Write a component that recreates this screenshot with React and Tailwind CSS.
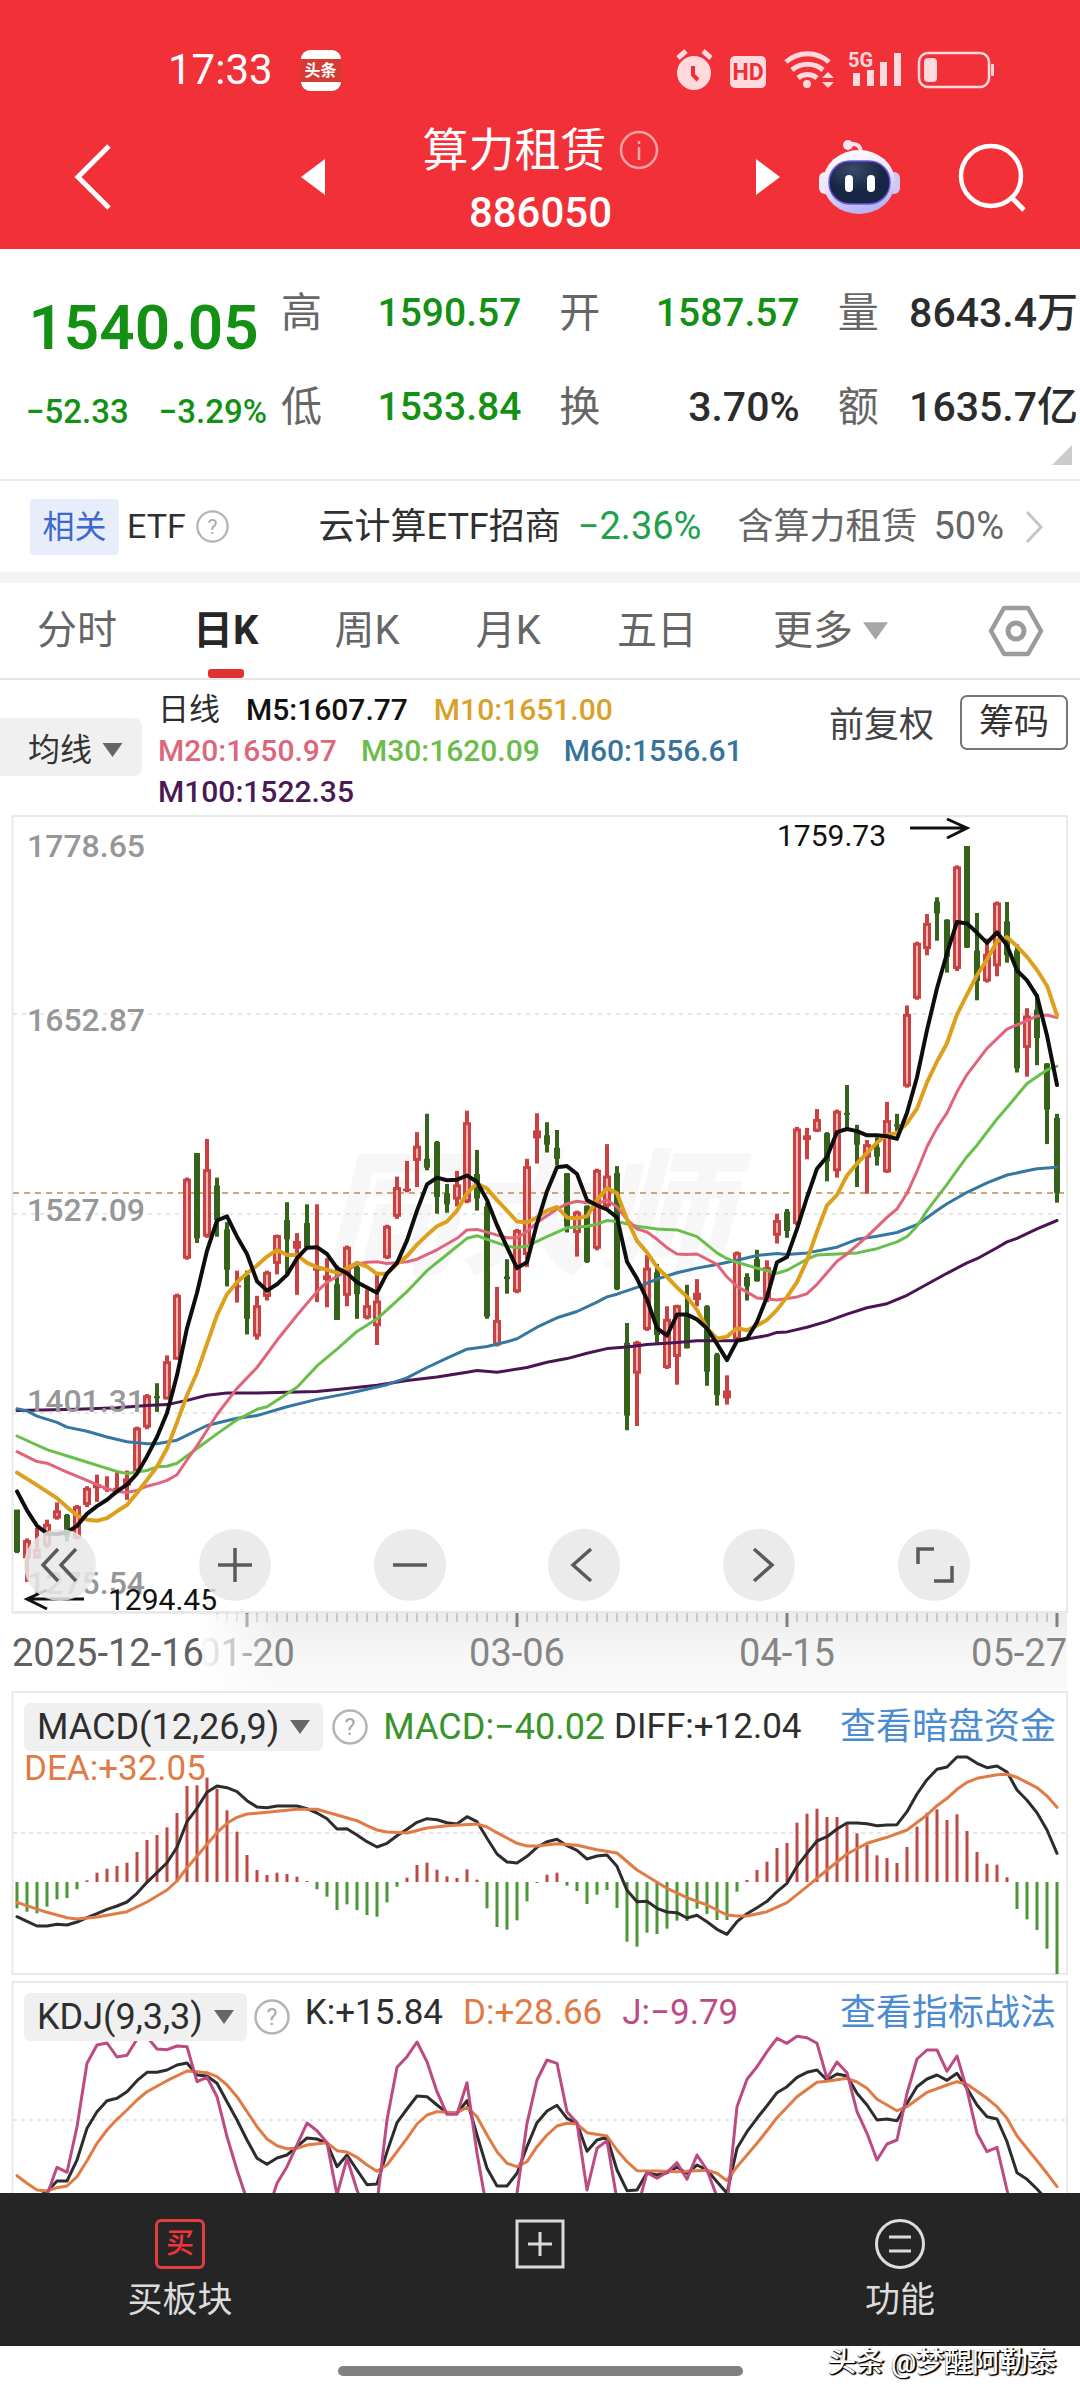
import React from "react";

const GREEN = "#35631b";
const RED = "#c94141";

/* Chart rows are digitised on a 1568-step grid that covers 820 px. */
const cy = (v) => Math.round((800 + v / 1.912) * 10) / 10;
const cx = (i) => 17 + i * 10;

// high, body top, body bottom, low, direction
const CANDLES = `1357,1357,1438,1440,g;1412,1415,1450,1495,r;1392,1432,1450,1450,r;1376,1384,1426,1430,r;1343,1358,1374,1376,r;1365,1367,1408,1418,g;1348,1350,1412,1414,r;1312,1315,1348,1352,r;1290,1308,1316,1342,r;1293,1315,1318,1323,r;1285,1315,1320,1323,r;1282,1297,1311,1338,r;1198,1200,1284,1284,r;1136,1138,1200,1203,r;1115,1140,1142,1170,g;1062,1073,1146,1146,r;944,946,1070,1070,r;722,724,877,879,r;675,675,838,847,g;648,706,835,837,r;722,737,803,835,g;807,821,898,930,g;900,928,932,961,r;900,908,992,1022,g;948,966,1026,1032,r;900,902,950,957,r;831,832,887,907,r;769,803,840,909,g;828,843,858,946,r;773,809,855,858,g;773,895,900,960,r;876,909,918,970,r;890,926,994,994,g;852,854,948,968,r;882,893,945,992,g;936,966,991,993,r;903,957,1006,1042,r;812,814,876,878,r;720,740,797,801,r;690,743,748,750,r;635,661,690,740,r;600,686,703,708,g;652,654,759,791,g;734,752,773,789,g;709,735,764,777,r;594,616,769,771,r;669,715,762,785,g;770,777,988,992,g;931,994,1043,1045,r;878,911,916,944,g;820,822,941,943,r;686,700,870,893,r;599,632,647,695,r;616,641,659,674,g;631,665,686,698,g;713,714,815,827,g;785,787,828,873,r;775,776,883,885,g;705,707,858,861,r;658,718,777,780,r;700,713,935,937,g;1000,1038,1177,1205,g;1034,1036,1097,1197,r;870,894,1013,1015,r;887,903,1023,1038,g;968,992,1086,1088,r;965,966,1065,1118,r;927,985,1048,1049,g;916,942,956,968,r;966,968,1093,1120,g;1057,1060,1138,1158,g;1100,1129,1144,1156,r;863,865,1032,1034,r;905,912,930,957,g;860,878,920,921,g;880,893,955,960,r;791,803,833,848,r;782,787,824,837,g;625,628,811,813,r;627,641,650,687,r;591,610,634,635,r;635,637,691,729,g;592,594,710,722,r;545,598,601,627,g;621,635,659,740,g;650,658,684,753,r;645,664,682,699,g;577,612,712,713,r;600,620,623,633,g;393,409,548,550,r;271,273,380,382,r;218,235,285,297,r;186,194,217,269,g;228,229,300,330,g;125,127,323,327,r;88,88,282,283,g;216,288,346,383,g;265,294,347,349,r;194,196,318,337,r;195,232,297,311,g;276,288,513,521,g;398,412,474,529,r;372,401,455,507,g;503,504,592,658,g;600,608,751,770,g`
  .split(";")
  .map((row) => {
    const p = row.split(",");
    return { h: +p[0], t: +p[1], b: +p[2], l: +p[3], up: p[4] === "r" };
  });

const MA = [
  { color: "#4a1552", w: 3, d: "0:1167,6:1165,10:1162,13:1158,15:1156,17:1148,19:1138,21:1134,24:1134,28:1132,30:1131,33:1125,36:1119,39:1110,42:1103,45:1094,46:1091,48:1094,51:1085,53:1075,55:1068,57:1058,59:1049,61:1046,63:1041,66:1037,68:1034,72:1034,75:1024,76:1018,77:1017,79:1008,81:997,83:983,85:971,87:963,89:947,91:926,93:905,95:885,96:877,98:856,99:845,100:838,102:820,104:804" },
  { color: "#3677a0", w: 3, d: "0:1164,1:1168,2:1178,4:1190,5:1199,7:1207,9:1218,11:1227,13:1231,14:1231,16:1224,19:1196,22:1182,24:1177,27:1160,30:1146,33:1135,34:1131,37:1118,39:1105,41:1085,43:1067,45:1050,47:1045,49:1036,50:1030,52:1008,54:990,56:978,58:960,59:950,60:945,62:932,64:916,66:904,68:895,70:888,72:880,74:871,76:867,77:869,79:866,82:855,84:840,86:834,88:827,90:812,92:785,93:772,95:750,97:732,99:717,101:709,102:705,104:702" },
  { color: "#6abf4b", w: 3, d: "0:1216,3:1242,6:1260,9:1278,10:1284,11:1288,13:1282,14:1275,15:1274,16:1268,18:1240,20:1212,22:1185,24:1165,25:1160,28:1123,30:1082,32:1050,34:1016,36:992,37:975,39:940,41:900,43:869,45:838,46:833,47:840,49:853,50:856,51:853,53:835,55:818,57:815,58:811,59:804,60:806,62:815,64:820,66:822,68:835,70:866,71:877,72:884,74:895,76:905,77:899,79:878,80:870,82:868,84:866,86:858,88:845,89:835,90:815,91:785,93:735,94:708,95:682,96:660,98:610,99:588,100:565,101:542,103:516,104:509" },
  { color: "#e2647a", w: 3, d: "0:1246,2:1265,3:1268,5:1285,7:1301,9:1317,10:1322,11:1324,12:1320,13:1312,14:1307,15:1301,16:1290,17:1262,18:1235,20:1175,22:1125,24:1085,26:1033,28:985,30:940,31:922,33:900,34:887,35:884,36:883,37:886,39:883,40:878,42:860,44:838,45:822,46:821,48:832,49:837,50:837,51:825,52:808,54:782,55:772,56:767,57:770,58:772,59:765,60:778,61:802,62:820,63:826,64:840,65:856,66:868,67:869,68:868,70:888,71:912,72:930,74:952,75:954,76:956,78:950,79:944,80:926,81:904,82:882,83:868,85:835,87:798,88:782,89:752,90:710,91:663,92:627,93:598,94:558,95:525,97:475,99:438,101:422,102:413,103:411,104:416" },
  { color: "#dda01c", w: 4, d: "0:1286,2:1310,4:1335,5:1352,6:1368,7:1376,8:1378,9:1373,10:1360,11:1348,12:1325,13:1300,14:1275,15:1240,16:1190,17:1138,18:1095,19:1040,20:985,21:945,22:922,23:905,24:890,25:873,26:860,27:870,28:870,29:885,30:893,31:898,32:904,33:895,34:885,35:892,36:906,37:906,38:887,39:872,40:850,41:832,42:815,43:806,44:785,45:752,46:733,47:743,48:765,49:785,50:806,51:808,52:798,53:785,54:778,55:798,56:800,57:796,58:765,59:742,60:752,61:802,62:843,63:865,64:893,65:912,66:932,67:950,68:975,69:1010,70:1030,71:1026,72:1010,73:1014,74:1005,75:994,76:975,77:950,78:922,79:880,80:825,81:775,82:755,83:718,84:695,85:675,86:655,87:640,88:637,89:618,90:590,91:540,92:500,93:465,94:410,95:372,96:335,97:305,98:270,99:262,100:280,101:300,102:325,103:355,104:412" },
  { color: "#0e0e0e", w: 4, d: "0:1322,1:1358,2:1388,3:1402,4:1404,5:1400,6:1388,7:1365,8:1350,9:1338,10:1322,11:1309,12:1288,13:1255,14:1218,15:1172,16:1100,17:1010,18:942,19:862,20:804,21:796,22:835,23:868,24:920,25:938,26:926,27:908,28:876,29:856,30:855,31:868,32:895,33:905,34:922,35:932,36:942,37:905,38:885,39:842,40:785,41:735,42:722,43:727,44:726,45:718,46:730,47:765,48:813,49:855,50:895,51:884,52:810,53:748,54:702,55:700,56:715,57:765,58:775,59:783,60:798,61:883,62:915,63:955,64:1010,65:1024,66:984,67:984,68:993,69:1010,70:1040,71:1071,72:1034,73:1030,74:998,75:950,76:884,77:874,78:820,79:760,80:705,81:682,82:635,83:629,84:633,85:641,86:641,87:643,88:648,89:598,90:530,91:440,92:360,93:293,94:233,95:236,96:254,97:273,98:253,99:278,100:326,101:345,102:375,103:450,104:545" },
];

const BARS = [-79,-89,-94,-74,-52,-48,-22,5,28,40,48,58,90,126,141,164,207,288,290,313,280,215,151,81,36,21,28,24,16,3,-22,-44,-84,-67,-84,-99,-104,-61,-14,13,51,58,37,17,12,38,7,-79,-135,-143,-115,-58,-3,22,28,-11,-27,-66,-38,-24,-78,-179,-194,-152,-156,-140,-116,-117,-80,-96,-114,-114,-29,6,36,61,102,117,178,205,220,195,195,173,146,111,80,72,57,105,166,208,218,186,203,153,90,55,52,14,-81,-112,-144,-200,-276];

const DIFF = "0:680,1:694,2:708,3:708,4:703,5:705,6:696,7:683,8:671,9:658,10:648,11:636,12:610,13:577,14:548,15:518,16:472,17:395,18:355,19:307,20:288,21:293,22:305,23:332,24:351,25:353,26:348,28:348,29:356,30:369,31:386,32:417,33:416,34:435,35:455,36:471,37:460,38:437,39:418,40:397,41:386,42:389,43:398,44:402,45:380,46:395,47:445,48:492,49:516,50:519,51:499,52:472,53:455,54:448,55:467,56:481,57:507,58:498,59:495,60:529,61:601,62:635,63:634,64:655,65:666,66:668,67:684,68:676,69:695,70:718,71:733,72:695,73:671,74:653,75:634,76:605,77:580,78:529,79:490,80:453,81:440,82:417,83:399,84:399,85:401,86:407,87:405,88:404,89:365,90:312,91:269,92:238,93:231,94:201,95:201,96:220,97:233,98:228,99:246,100:300,101:331,102:368,103:420,104:490";
const DEA = "0:637,3:667,5:683,6:687,8:681,11:665,13:636,15:600,16:573,17:533,18:499,19:463,20:428,21:400,22:382,23:372,25:367,28:358,30:358,32:375,34:392,35:407,36:420,37:426,39:429,41:414,43:407,46:402,47:411,48:428,50:460,51:468,52:468,54:461,56:466,58:479,60:489,62:540,65:595,67:623,69:645,71:675,72:678,73:678,75:665,77:638,79:590,81:540,83:492,85:460,87:442,89:420,91:375,92:347,93:325,94:298,95:277,96:265,98:254,99:253,100:262,102:293,103:318,104:352";
const KLINE = "2:1520,3:1505,4:1473,5:1473,6:1410,7:1315,8:1265,9:1232,10:1225,11:1205,12:1172,13:1147,14:1147,15:1140,16:1125,17:1119,18:1155,19:1158,20:1180,21:1235,22:1290,23:1350,24:1405,25:1423,26:1404,27:1395,28:1370,29:1344,30:1347,31:1360,32:1430,33:1395,34:1440,35:1484,36:1482,37:1385,38:1298,39:1257,40:1218,41:1220,42:1245,43:1268,44:1270,45:1232,46:1335,47:1435,48:1488,49:1488,50:1450,51:1370,52:1298,53:1263,54:1246,55:1285,56:1300,57:1384,58:1350,59:1342,60:1440,61:1502,62:1500,63:1448,64:1455,65:1448,66:1432,67:1450,68:1425,69:1440,70:1475,71:1510,72:1375,73:1325,74:1285,75:1247,76:1208,77:1190,78:1162,79:1147,80:1140,81:1170,82:1152,83:1158,84:1210,85:1245,86:1290,87:1287,88:1292,89:1240,90:1190,91:1167,92:1155,93:1171,94:1150,95:1195,96:1245,97:1280,98:1287,99:1355,100:1448,101:1468,102:1497,103:1530";
const DLINE = "0:1457,1:1480,2:1500,3:1503,4:1493,5:1488,6:1460,7:1412,8:1360,9:1320,10:1288,11:1260,12:1230,13:1205,15:1172,17:1143,18:1145,19:1148,20:1160,21:1185,22:1220,24:1310,25:1347,26:1367,27:1376,28:1375,29:1365,31:1358,32:1382,33:1386,34:1402,35:1425,36:1444,37:1425,38:1385,39:1345,40:1302,41:1275,42:1265,44:1268,45:1252,46:1280,47:1335,48:1385,49:1420,50:1430,51:1415,52:1370,53:1335,54:1308,55:1300,56:1302,57:1328,59:1338,60:1380,61:1415,62:1442,64:1443,66:1445,69:1441,70:1450,71:1472,72:1430,73:1395,74:1360,75:1322,76:1283,78:1220,80:1177,81:1174,83:1165,84:1176,85:1195,86:1228,88:1262,89:1250,91:1207,93:1185,94:1175,95:1183,97:1225,98:1250,99:1285,100:1338,102:1412,103:1450,104:1490";
const JLINE = "3:1515,4:1432,5:1447,6:1310,7:1120,8:1065,9:1059,10:1101,11:1096,12:1048,13:1040,14:1077,15:1079,16:1068,17:1070,18:1175,19:1162,20:1220,21:1340,22:1440,23:1530,24:1600,25:1570,26:1480,27:1430,28:1365,29:1299,30:1322,31:1358,32:1515,33:1405,34:1500,35:1580,36:1540,37:1290,38:1132,39:1100,40:1056,41:1115,42:1205,43:1273,44:1273,45:1178,46:1390,47:1560,48:1600,49:1600,50:1510,51:1300,52:1170,53:1110,54:1120,55:1265,56:1298,57:1500,58:1375,59:1352,60:1530,61:1600,62:1560,63:1448,64:1465,65:1447,66:1418,67:1468,68:1395,69:1440,70:1520,71:1545,72:1250,73:1168,74:1130,75:1085,76:1045,77:1060,78:1039,79:1043,80:1060,81:1165,82:1116,83:1148,84:1265,85:1330,86:1410,87:1362,88:1350,89:1210,90:1107,91:1080,92:1080,93:1144,94:1098,95:1200,96:1330,97:1385,98:1372,99:1500,100:1620";

const pts = (d, fy) =>
  d
    .split(",")
    .map((p) => {
      const [i, v] = p.split(":");
      return `${cx(+i)},${fy(+v)}`;
    })
    .join(" ");
const sy = (v) => Math.round((1690 + v / 3) * 10) / 10;

const Line = ({ d, color, w = 3, fy = sy }) => (
  <polyline points={pts(d, fy)} fill="none" stroke={color} strokeWidth={w} strokeLinejoin="round" strokeLinecap="round" />
);

const Caret = ({ className }) => (
  <svg viewBox="0 0 20 14" className={className} aria-hidden="true">
    <path d="M0 0H20L10 14Z" fill="currentColor" />
  </svg>
);

function StatusBar() {
  return (
    <div className="flex h-[44px] items-center pr-[84px] pl-[168px] text-white">
      <span className="text-[42px] leading-none">17:33</span>
      <span className="ml-[28px] flex h-[41px] w-[40px] flex-col justify-center overflow-hidden rounded-[9px] bg-white">
        <span className="bg-[#d43c33] text-center text-[16px] leading-[23px] font-bold">头条</span>
      </span>
      <svg viewBox="676 46 320 46" className="ml-auto h-[46px] w-[320px]" aria-label="5G HD" role="img" fill="#ffd9dc">
        <circle cx="694" cy="72" r="17" />
        <path d="M678 57l8-7M711 57l-8-7" stroke="#ffd9dc" strokeWidth="5" fill="none" />
        <path d="M693 65v9l5 5" stroke="#ef3038" strokeWidth="4" fill="none" />
        <rect x="730" y="55" width="36" height="32" rx="5" />
        <text x="748" y="79" textAnchor="middle" fontSize="23" fontWeight="700" fill="#ef3038">HD</text>
        <g fill="none" stroke="#ffd9dc" strokeWidth="5">
          <path d="M786 61a32 32 0 0 1 43 0" />
          <path d="M792 69a24 24 0 0 1 31 0" />
          <path d="M798 77a15 15 0 0 1 19 0" />
        </g>
        <circle cx="807" cy="83" r="4" />
        <path d="M822 77l6-6 6 6zM822 81h12l-6 6z" />
        <text x="848" y="66" fontSize="20" fontWeight="700">5G</text>
        <rect x="853" y="72" width="7" height="13" />
        <rect x="867" y="69" width="7" height="16" />
        <rect x="880" y="61" width="7" height="24" />
        <rect x="894" y="52" width="7" height="33" />
        <rect x="919" y="52" width="70" height="34" rx="9" fill="none" stroke="#ffd9dc" strokeWidth="2.5" />
        <rect x="924" y="57" width="13" height="24" rx="4" />
        <rect x="991" y="63" width="3" height="12" rx="1" />
      </svg>
    </div>
  );
}

function Header() {
  return (
    <header className="bg-[#f13038] pt-12 pb-[5px] text-white">
      <StatusBar />
      <div className="grid grid-cols-[301px_1fr_300px] items-center pt-[18px]">
        <button aria-label="返回" className="ml-[73px] justify-self-start">
          <svg viewBox="0 0 40 66" className="h-[66px] w-[40px]" fill="none" stroke="#fff" strokeWidth="5">
            <path d="M36 2L5 33l31 31" />
          </svg>
        </button>
        <div className="flex items-center justify-between">
          <button aria-label="上一个">
            <svg viewBox="0 0 24 36" className="h-[36px] w-[24px]" fill="#fff"><path d="M24 0V36L0 18Z" /></svg>
          </button>
          <div className="flex flex-col items-center pt-2">
            <h1 className="flex items-center gap-[12px] text-[46px] leading-[64px]">
              算力租赁
              <svg viewBox="0 0 40 40" className="h-[40px] w-[40px]" fill="none" stroke="#ffa3a7" strokeWidth="2.5">
                <circle cx="20" cy="20" r="18" />
                <path d="M20 17v13M20 11v3" />
              </svg>
            </h1>
            <span className="text-[42px] leading-[62px] font-medium">886050</span>
          </div>
          <button aria-label="下一个">
            <svg viewBox="0 0 24 36" className="h-[36px] w-[24px]" fill="#fff"><path d="M0 0V36L24 18Z" /></svg>
          </button>
        </div>
        <div className="flex items-center justify-between pr-[52px] pl-[38px]">
          <button aria-label="智能助手">
            <svg viewBox="0 0 82 76" className="h-[76px] w-[82px]">
              <defs>
                <linearGradient id="shell" x1="0" y1="0" x2="0.3" y2="1">
                  <stop offset="0" stopColor="#fff" />
                  <stop offset="0.55" stopColor="#efe4fb" />
                  <stop offset="1" stopColor="#b9b4f4" />
                </linearGradient>
                <radialGradient id="visor" cx="0.4" cy="0.2">
                  <stop offset="0" stopColor="#3b4a68" />
                  <stop offset="1" stopColor="#182544" />
                </radialGradient>
              </defs>
              <path d="M31 6c7-3 12 1 12 8" fill="none" stroke="#fbe3ee" strokeWidth="4" />
              <circle cx="30" cy="6" r="5" fill="#fbe6f0" />
              <rect x="1" y="33" width="12" height="22" rx="6" fill="#f0e8ff" />
              <rect x="70" y="33" width="12" height="22" rx="6" fill="#cfc7fb" />
              <ellipse cx="41" cy="43" rx="36" ry="32" fill="url(#shell)" />
              <rect x="11" y="22" width="61" height="43" rx="21" fill="url(#visor)" stroke="#6a5be0" strokeWidth="1.5" />
              <rect x="27" y="36" width="8" height="17" rx="4" fill="#fff" />
              <rect x="49" y="36" width="8" height="17" rx="4" fill="#fff" />
            </svg>
          </button>
          <button aria-label="搜索">
            <svg viewBox="0 0 70 70" className="h-[70px] w-[70px]" fill="none" stroke="#fff" strokeWidth="4.5">
              <circle cx="33" cy="34" r="30" />
              <path d="M53 55l13 13" strokeWidth="5" />
            </svg>
          </button>
        </div>
      </div>
    </header>
  );
}

const STATS = [
  ["高", "1590.57", "text-[39px] text-[#149014]"],
  ["开", "1587.57", "text-[39px] text-[#149014]"],
  ["量", "8643.4万", "text-[41px] text-[#2c2c2c]"],
  ["低", "1533.84", "text-[39px] text-[#149014]"],
  ["换", "3.70%", "text-[41px] text-[#2c2c2c]"],
  ["额", "1635.7亿", "text-[41px] text-[#2c2c2c]"],
];

function Quote() {
  return (
    <section className="relative flex h-[232px] border-b-2 border-[#ececec] pt-[17px]">
      <div className="flex w-[281px] shrink-0 flex-col pt-[20px] text-[#149014]">
        <strong className="pl-[6px] text-center text-[62px] leading-[84px] font-semibold">1540.05</strong>
        <div className="flex justify-between pr-[14px] pl-[26px] text-[33px] leading-[84px] font-medium">
          <span>−52.33</span>
          <span>−3.29%</span>
        </div>
      </div>
      <dl className="grid flex-1 grid-cols-3 gap-x-[38px] self-start pr-[2px]">
        {STATS.map(([k, v, c]) => (
          <div key={k} className="flex items-center justify-between whitespace-nowrap leading-[94px]">
            <dt className="text-[41px] text-[#666]">{k}</dt>
            <dd className={"font-medium " + c}>{v}</dd>
          </div>
        ))}
      </dl>
      <svg viewBox="0 0 20 20" className="absolute right-[8px] bottom-[14px] h-[20px] w-[20px]" fill="#cbcbcb"><path d="M20 0V20H0Z" /></svg>
    </section>
  );
}

const Help = ({ className }) => (
  <svg viewBox="0 0 36 36" className={className} aria-label="帮助" role="img">
    <circle cx="18" cy="18" r="16.5" fill="none" stroke="#b4b4b4" strokeWidth="2.5" />
    <text x="18" y="26" textAnchor="middle" fontSize="23" fill="#a8a8a8">?</text>
  </svg>
);

function EtfRow() {
  return (
    <a href="#etf" className="box-content flex h-[91px] items-center border-b-[11px] border-[#f3f3f3] pr-[36px] pl-[30px] text-[36px] whitespace-nowrap text-[#2f2f2f]">
      <span className="flex h-[56px] w-[89px] items-center justify-center rounded-[4px] bg-[#e7edfb] text-[32px] text-[#3f68cc]">相关</span>
      <span className="ml-[8px] text-[34px]">ETF</span>
      <Help className="ml-[10px] h-[33px] w-[33px]" />
      <span className="ml-auto">云计算ETF招商</span>
      <span className="ml-[17px] text-[38px] text-[#22a04c]">−2.36%</span>
      <span className="ml-[36px] text-[#666]">含算力租赁</span>
      <span className="ml-[16px] text-[38px] text-[#666]">50%</span>
      <svg viewBox="0 0 20 34" className="ml-[21px] h-[32px] w-[19px]" fill="none" stroke="#c4c4c4" strokeWidth="3"><path d="M2 1l15 16L2 33" /></svg>
    </a>
  );
}

function Tabs() {
  const tab = "flex h-full items-center";
  return (
    <nav className="flex h-[97px] items-center border-b-2 border-[#e6e6e6] pr-[36px] pl-[37px] text-[40px] text-[#666]">
      <div className="mr-[100px] flex h-full flex-1 items-center justify-between">
        <button className={tab}>分时</button>
        <button className="relative flex h-full items-center font-bold text-[#262626]">
          日K
          <span className="absolute bottom-0 left-1/2 h-[9px] w-[36px] -translate-x-1/2 rounded-[3px] bg-[#e03232]" />
        </button>
        <button className={tab}>周K</button>
        <button className={tab}>月K</button>
        <button className={tab}>五日</button>
        <button className="flex h-full items-center gap-[10px]">更多<Caret className="h-[20px] w-[25px] text-[#a6a6a6]" /></button>
      </div>
      <button aria-label="设置">
        <svg viewBox="0 0 56 52" className="h-[52px] w-[56px]" fill="none" stroke="#9b9b9b" strokeWidth="4.5" strokeLinejoin="round">
          <path d="M16 3h24l13 23-13 23H16L3 26Z" />
          <circle cx="28" cy="26" r="8" strokeWidth="5" />
        </svg>
      </button>
    </nav>
  );
}

function Averages() {
  return (
    <section className="flex h-[134px] items-start whitespace-nowrap">
      <button className="mt-[38px] flex h-[58px] w-[142px] items-center gap-[10px] rounded-r-[8px] bg-[#f0f0f0] pt-[6px] pl-[28px] text-[32px] text-[#333]">
        均线<Caret className="h-[14px] w-[21px] text-[#666]" />
      </button>
      <div className="ml-[16px] w-[640px] pt-[9px] text-[30px] leading-[41px] font-medium">
        <p className="flex gap-[26px]">
          <span className="text-[31px] font-normal text-[#2c2c2c]">日线</span>
          <span className="text-[#111]">M5:1607.77</span>
          <span className="text-[#d9a02a]">M10:1651.00</span>
        </p>
        <p className="flex gap-[24px]">
          <span className="text-[#dd667b]">M20:1650.97</span>
          <span className="text-[#6cbc4c]">M30:1620.09</span>
          <span className="text-[#36749c]">M60:1556.61</span>
        </p>
        <p className="text-[#491a52]">M100:1522.35</p>
      </div>
      <div className="mr-[12px] ml-auto flex items-center gap-[26px] pt-[12px] text-[35px] text-[#444]">
        <button className="pt-2">前复权</button>
        <button className="h-[55px] rounded-[7px] border-2 border-[#777] px-[17px] leading-[51px] text-[#333]">筹码</button>
      </div>
    </section>
  );
}

const GLYPHS = [
  ["最早", <path d="M30 16L15 32l15 16M48 16L33 32l15 16" />],
  ["放大", <path d="M15 32h34M32 15v34" />],
  ["缩小", <path d="M15 32h34" />],
  ["向左", <path d="M39 16L21 32l18 16" />],
  ["向右", <path d="M27 16l18 16-18 16" />],
  ["全屏", <path d="M16 31V16h16M32 48h18V33" />],
];

function CandleChart() {
  const axis = [["1778.65", 845], ["1652.87", 1019], ["1527.09", 1209], ["1401.31", 1400], ["1275.54", 1582]];
  return (
    <section className="grid">
      <svg viewBox="0 814 1080 877" className="block w-full [grid-area:1/1]" role="img" aria-label="日K">
        <defs>
          <linearGradient id="ruler" x1="0" y1="0" x2="0" y2="1">
            <stop offset="0" stopColor="#ececec" />
            <stop offset="0.5" stopColor="#f6f6f6" />
            <stop offset="1" stopColor="#fafafa" />
          </linearGradient>
          <linearGradient id="fade" x1="0" y1="0" x2="1" y2="0">
            <stop offset="0" stopColor="#fff" />
            <stop offset="0.72" stopColor="#fff" />
            <stop offset="1" stopColor="#fff" stopOpacity="0" />
          </linearGradient>
        </defs>
        <text x="322" y="1264" fontSize="136" fontWeight="900" fill="#f7f7f7" fontStyle="italic">同大师</text>
        <rect x="12.5" y="816" width="1054.5" height="796" fill="none" stroke="#e9e9e9" strokeWidth="2" />
        {[1014, 1214, 1413].map((y) => (
          <path key={y} d={`M13 ${y}H1066`} stroke="#e0e0e0" strokeDasharray="4 5" strokeWidth="1.5" />
        ))}
        <path d="M13 1193H1066" stroke="#cda877" strokeDasharray="6 5" strokeWidth="2" />
        {CANDLES.map((c, i) => {
          const x = cx(i);
          const color = c.up ? RED : GREEN;
          const h = Math.max(cy(c.b) - cy(c.t), 2);
          return (
            <g key={i}>
              <path d={`M${x} ${cy(c.h)}V${cy(c.l)}`} stroke={color} strokeWidth="4" />
              <rect x={x - (c.up ? 4 : 3)} y={cy(c.t)} width={c.up ? 8 : 6} height={h} fill={color} />
              {c.up && h > 8 && <rect x={x - 1} y={cy(c.t) + 3} width="2" height={h - 6} fill="#ffb3b0" />}
            </g>
          );
        })}
        {MA.map((m) => (
          <Line key={m.color} d={m.d} color={m.color} w={m.w} fy={cy} />
        ))}
        <g fontSize="32" fill="#979797" fontWeight="500">
          {axis.map(([t, y]) => (
            <text key={t} x="27" y={y + 12}>{t}</text>
          ))}
        </g>
        <g fontSize="30" fill="#111">
          <text x="777" y="846">1759.73</text>
          <text x="108" y="1610">1294.45</text>
        </g>
        <path d="M910 828H966M947 819L967 828L947 838M84 1599H28M47 1590L27 1599L47 1609" fill="none" stroke="#111" strokeWidth="3" />
        <rect x="12" y="1613" width="1055" height="77" fill="url(#ruler)" />
        {Array.from({ length: 85 }, (_, k) => (
          <path key={k} d={`M${217 + k * 10} 1613v9`} stroke="#a6a6a6" strokeWidth="1" />
        ))}
        {[247, 517, 787, 1057].map((x) => (
          <path key={x} d={`M${x} 1613v14`} stroke="#808080" strokeWidth="3" />
        ))}
        <g fontSize="38" fill="#858585" textAnchor="middle">
          <text x="247" y="1666">01-20</text>
          <text x="517" y="1666">03-06</text>
          <text x="787" y="1666">04-15</text>
          <text x="1067" y="1666" textAnchor="end">05-27</text>
        </g>
        <rect x="0" y="1614" width="275" height="77" fill="url(#fade)" />
        <text x="12" y="1666" fontSize="38" fill="#606060">2025-12-16</text>
      </svg>
      <div className="mb-[90px] flex justify-between self-end pr-[110px] pl-6 [grid-area:1/1]">
        {GLYPHS.map(([label, g]) => (
          <button key={label} aria-label={label} className="h-[72px] w-[72px] rounded-full bg-[#e8e8e8]/85">
            <svg viewBox="-4 -4 72 72" className="h-full w-full" fill="none" stroke="#5a5a5a" strokeWidth="3.5">{g}</svg>
          </button>
        ))}
      </div>
    </section>
  );
}

const Picker = ({ children }) => (
  <button className="flex h-[48px] items-center gap-[11px] rounded-[6px] bg-[#f0f0f0] px-[13px] text-[36px] text-[#2e2e2e]">
    {children}
    <Caret className="h-[14px] w-[20px] text-[#666]" />
  </button>
);

function Macd() {
  return (
    <section className="grid">
      <svg viewBox="0 1691 1080 290" className="block w-full [grid-area:1/1]" role="img" aria-label="MACD">
        <rect x="12.5" y="1692" width="1054.5" height="282" fill="none" stroke="#e9e9e9" strokeWidth="2" />
        <path d="M13 1833H1066" stroke="#dedede" strokeDasharray="4 4" strokeWidth="1.5" />
        {BARS.map((v, i) => (
          <rect key={i} x={cx(i) - 1.5} y={v > 0 ? 1882 - v / 3 : 1882} width="3" height={Math.abs(v) / 3} fill={v > 0 ? "#be4a45" : "#4c9637"} />
        ))}
        <Line d={DIFF} color="#2d2d2d" />
        <Line d={DEA} color="#e07b46" />
      </svg>
      <div className="mr-[24px] ml-[24px] pt-[12px] text-[36px] whitespace-nowrap [grid-area:1/1]">
        <div className="flex h-[48px] items-center">
          <Picker>MACD(12,26,9)</Picker>
          <Help className="ml-[9px] h-[36px] w-[36px]" />
          <span className="ml-[15px] text-[#38942a]">MACD:−40.02</span>
          <span className="ml-[9px] text-[35px] text-[#2e2e2e]">DIFF:+12.04</span>
          <a href="#fund" className="ml-auto text-[#4c8bd0]">查看暗盘资金</a>
        </div>
        <p className="text-[35px] leading-[36px] text-[#e07b46]">DEA:+32.05</p>
      </div>
    </section>
  );
}

function Kdj() {
  return (
    <section className="grid">
      <svg viewBox="0 1981 1080 212" className="block w-full overflow-hidden [grid-area:1/1]" role="img" aria-label="KDJ">
        <path d="M12.5 2193V1982H1067V2193" fill="none" stroke="#e9e9e9" strokeWidth="2" />
        <path d="M13 2120H1066" stroke="#dedede" strokeDasharray="4 4" strokeWidth="1.5" />
        <Line d={KLINE} color="#2d2d2d" />
        <Line d={DLINE} color="#e07b46" />
        <Line d={JLINE} color="#bd4a83" />
      </svg>
      <div className="mr-[24px] ml-[24px] flex items-start pt-[12px] text-[35px] leading-[40px] whitespace-nowrap [grid-area:1/1]">
        <Picker>KDJ(9,3,3)</Picker>
        <Help className="mt-[6px] ml-[7px] h-[36px] w-[36px]" />
        <span className="ml-[15px] text-[#2e2e2e]">K:+15.84</span>
        <span className="ml-[20px] text-[#e07b46]">D:+28.66</span>
        <span className="ml-[20px] text-[#bd4a83]">J:−9.79</span>
        <a href="#tactics" className="ml-auto text-[36px] text-[#4c8bd0]">查看指标战法</a>
      </div>
    </section>
  );
}

function BottomBar() {
  const item = "flex flex-col items-center gap-[8px] pt-[26px] text-[35px] leading-[48px]";
  return (
    <footer>
      <nav className="grid h-[153px] grid-cols-3 items-start bg-[#252525] text-[#dcdcdc]">
        <button className={item}>
          <span className="flex h-[50px] w-[50px] items-center justify-center rounded-[6px] border-[3px] border-[#e23b40] text-[28px] font-medium text-[#f0343c]">买</span>
          买板块
        </button>
        <button aria-label="添加" className={item}>
          <svg viewBox="0 0 50 50" className="h-[50px] w-[50px]" fill="none" stroke="#dcdcdc" strokeWidth="3"><path d="M2 2h46v46H2zM13 25h24M25 13v24" /></svg>
        </button>
        <button className={item}>
          <svg viewBox="0 0 50 50" className="h-[50px] w-[50px]" fill="none" stroke="#dcdcdc" strokeWidth="3"><circle cx="25" cy="25" r="23.5" /><path d="M14 18h22M14 32h22" /></svg>
          功能
        </button>
      </nav>
      <div className="relative flex h-[54px] justify-center pt-[20px]">
        <span className="h-[10px] w-[405px] rounded-full bg-[#808080]" />
        <span className="absolute top-0 right-[24px] text-[28px] leading-[34px] font-medium text-white [text-shadow:1px_1px_1px_#000,2px_1px_1px_#000,0_1px_1px_#000]">头条 @梦醒阿勒泰</span>
      </div>
    </footer>
  );
}

export default function App() {
  return (
    <main className="relative w-full overflow-hidden bg-white font-['Roboto','Noto_Sans_CJK_SC',sans-serif]">
      <Header />
      <Quote />
      <EtfRow />
      <Tabs />
      <Averages />
      <CandleChart />
      <Macd />
      <Kdj />
      <BottomBar />
    </main>
  );
}
